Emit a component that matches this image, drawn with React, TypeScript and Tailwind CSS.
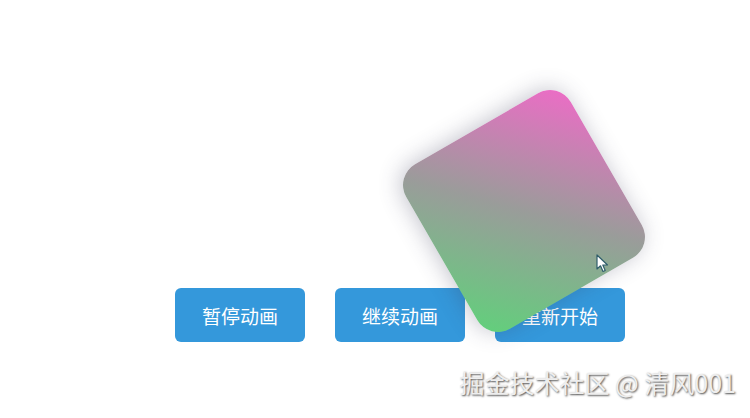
import React from 'react'

const buttons = ['暂停动画', '继续动画', '重新开始']

function Cursor() {
  return (
    <svg
      className="absolute left-[596px] top-[254px] z-20"
      width="14"
      height="20"
      viewBox="0 0 14 20"
    >
      <path
        d="M1 1 L1 15 L4.5 11.8 L7 17.5 L9.2 16.5 L6.8 11 L11.5 11 Z"
        fill="#ffffff"
        stroke="#2f5d6b"
        strokeWidth="1.2"
        strokeLinejoin="round"
      />
    </svg>
  )
}

export default function App() {
  return (
    <div className="relative w-full h-[418px] bg-white overflow-hidden font-['Noto_Sans_CJK_SC','Noto_Sans',sans-serif]">
      <div className="flex gap-[30px] pt-[288px] pl-[175px]">
        {buttons.map(label => (
          <button
            key={label}
            className="w-[130px] h-[54px] rounded-md bg-[#3498db] text-white text-[19px] leading-none"
          >
            {label}
          </button>
        ))}
      </div>

      <div className="absolute left-[429px] top-[116px] z-10 w-[190px] h-[190px] rounded-[24px] -rotate-30 bg-[linear-gradient(225deg,#f06ac8,#9a9c9a_50%,#5fd27a)] shadow-[-2px_-2px_22px_rgba(60,60,90,0.3)]" />

      <Cursor />

      <div className="absolute right-[14px] top-[370px] z-20 text-[25px] leading-none text-[#eeeeee] [text-shadow:1px_1px_2px_rgba(0,0,0,0.7)]">
        掘金技术社区 @ 清风001
      </div>
    </div>
  )
}
